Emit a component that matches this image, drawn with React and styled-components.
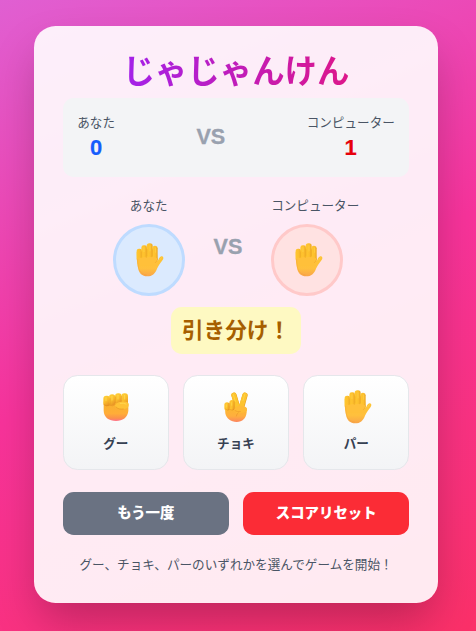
import React from "react";
import styled, { createGlobalStyle } from "styled-components";

const GlobalStyle = createGlobalStyle`
  * { box-sizing: border-box; }
  body {
    margin: 0;
    font-family: "Liberation Sans", "Noto Sans CJK JP", sans-serif;
    font-size: 14.4px;
  }
  h1, p { margin: 0; }
`;

const Page = styled.main`
  height: 631px;
  padding: 26px 38px 28px 34px;
  overflow: hidden;
  background: linear-gradient(156deg, #e05fd2 0%, #f7339b 50%, #fb3068 100%);
`;

const Card = styled.section`
  width: 404px;
  height: 577px;
  padding: 28px 28.8px 28.8px;
  border-radius: 21.6px;
  background: rgba(255, 255, 255, 0.9);
  box-shadow: 0 22px 45px -6px rgba(0, 0, 0, 0.25);
  display: flex;
  flex-direction: column;
`;

const Title = styled.h1`
  width: 100%;
  display: flex;
  justify-content: center;
  height: 36px;
  margin-bottom: 7.8px;

  span {
    font-size: 32.4px;
    line-height: 36px;
    font-weight: 700;
    color: transparent;
    background: linear-gradient(90deg, #a322ea, #dd178a);
    -webkit-background-clip: text;
    background-clip: text;
  }
`;

const ScoreBoard = styled.div`
  display: flex;
  justify-content: space-between;
  align-items: center;
  height: 79.4px;
  padding: 14.4px;
  border-radius: 10.8px;
  background: #f3f4f6;
`;

const Score = styled.div`
  text-align: center;
  padding-top: 3px;
`;

const Label = styled.p`
  font-size: 12.6px;
  line-height: 18px;
  text-align: center;
  color: #4a5565;
`;

const Points = styled.p`
  font-size: 22px;
  line-height: 32.4px;
  font-weight: 700;
  color: ${({ $color }) => $color};
  -webkit-text-stroke: 0.2px ${({ $color }) => $color};
`;

const Versus = styled.div`
  font-size: 21.6px;
  line-height: 28.8px;
  font-weight: 700;
  color: #99a1af;
  -webkit-text-stroke: 0.3px #99a1af;
`;

const ArenaVersus = styled(Versus)`
  padding-top: 2px;
`;

const Arena = styled.div`
  display: flex;
  justify-content: center;
  align-items: center;
  gap: 28.8px;
  height: 100px;
  margin-top: 18.8px;
`;

const Player = styled.div`
  display: flex;
  flex-direction: column;
  gap: 9px;
  padding-top: 1px;
`;

const Circle = styled.div`
  width: 72px;
  height: 72px;
  border-radius: 50%;
  display: flex;
  align-items: center;
  justify-content: center;
  padding: 0 0 1px 3px;
  background: ${({ $fill }) => $fill};
  border: 3px solid ${({ $line }) => $line};
`;

const Result = styled.div`
  align-self: center;
  margin-top: 11.2px;
  height: 46.8px;
  padding: 9.6px 10.8px 0;
  border-radius: 10.8px;
  background: #fef9c2;
  color: #a65f00;
  font-size: 21.6px;
  line-height: 28.8px;
  font-weight: 700;
`;

const Choices = styled.div`
  display: grid;
  grid-template-columns: repeat(3, 1fr);
  gap: 14.4px;
  margin-top: 21px;
`;

const Choice = styled.button`
  height: 95px;
  padding: 13px 0 0;
  border: 1px solid #e5e7eb;
  border-radius: 14.4px;
  background: linear-gradient(#ffffff, #f3f4f6);
  color: #364153;
  font: 700 12.6px/18px "Liberation Sans", "Noto Sans CJK JP", sans-serif;
  display: flex;
  flex-direction: column;
  align-items: center;
  gap: 10px;
`;

const IconSlot = styled.span`
  display: flex;
  height: 36px;
  align-items: center;
  padding-left: ${({ $shift }) => $shift}px;
`;

const Actions = styled.div`
  display: grid;
  grid-template-columns: 1fr 1fr;
  gap: 14.4px;
  margin-top: 22px;
`;

const Action = styled.button`
  height: 43px;
  padding: 0 0 3px;
  border: 0;
  border-radius: 10.8px;
  background: ${({ $bg }) => $bg};
  color: #fff;
  font: 900 14.4px/21.6px "Noto Sans CJK JP", sans-serif;
`;

const Hint = styled(Label)`
  margin-top: 21px;
  white-space: nowrap;
`;

const Svg = styled.svg`
  display: block;
  overflow: visible;
`;

function Hand({ id }) {
  return (
    <Svg width="28" height="33.3" viewBox="0 0 84 100">
      <defs>
        <linearGradient id={`${id}p`} x1="0" y1="0" x2="0" y2="1">
          <stop offset="0" stopColor="#fcc52e" />
          <stop offset=".7" stopColor="#ffc03d" />
          <stop offset="1" stopColor="#f9a54a" />
        </linearGradient>
        <linearGradient id={`${id}f`} x1="0" y1="0" x2="1" y2="0">
          <stop offset="0" stopColor="#ffc730" />
          <stop offset=".6" stopColor="#fdbf2d" />
          <stop offset="1" stopColor="#eba522" />
        </linearGradient>
      </defs>
      <path fill={`url(#${id}p)`} d="M2 26 L62 20 L65 54 C69 49 70 41 76 40 C82 40 84 45 80 51 C74 59 68 66 63 77 C58 92 48 100 34 100 C18 100 9 91 6 75 C4 65 2 54 2 26Z" />
      <g fill={`url(#${id}f)`}>
        <rect x="2" y="17" width="16" height="36" rx="6.5" />
        <rect x="16" y="7" width="17" height="47" rx="7" />
        <rect x="32" y="1" width="18" height="49" rx="8" />
        <rect x="49" y="8" width="16" height="46" rx="7.5" />
      </g>
      <path fill="#ffc03a" d="M2 48 Q9 41 16 46 Q24 40 32 44 Q40 39 48 43 Q56 39 65 48 L60 68 L7 68Z" />
      <path fill="none" stroke="#e59a22" strokeWidth="2" strokeLinecap="round" opacity=".6" d="M17 27V42M33 20V39M49.5 18V39M65 48C64 53 62 55 58 59" />
      <path fill="none" stroke="#ee903a" strokeWidth="3" strokeLinecap="round" opacity=".3" d="M5 49C5 76 10 94 31 96" />
      <path fill="none" stroke="#ffdb59" strokeWidth="3" strokeLinecap="round" opacity=".5" d="M42 8V24M59 15V28M24 14V26M76 44L71 51" />
    </Svg>
  );
}

function Fist() {
  return (
    <Svg width="26" height="28" viewBox="0 0 78 84">
      <defs>
        <linearGradient id="fistPalm" x1="0" y1="0" x2="0" y2="1">
          <stop offset="0" stopColor="#f6b42b" />
          <stop offset=".65" stopColor="#ffad38" />
          <stop offset=".87" stopColor="#fb914c" />
          <stop offset="1" stopColor="#ff718c" />
        </linearGradient>
        <linearGradient id="fistFinger" x1="0" y1="0" x2=".5" y2="1">
          <stop offset="0" stopColor="#ffd238" />
          <stop offset=".6" stopColor="#fabb2c" />
          <stop offset="1" stopColor="#ea9826" />
        </linearGradient>
      </defs>
      <path fill="url(#fistPalm)" d="M2 26C10 17 67 17 76 32V54C74 74 59 84 39 84C18 84 3 74 2 54Z" />
      <g fill="url(#fistFinger)">
        <rect x="1" y="8" width="20" height="31" rx="9" />
        <rect x="18" y="4" width="19" height="33" rx="9" />
        <rect x="36" y="1" width="20" height="32" rx="9" />
        <rect x="55" y="1" width="20" height="36" rx="9" />
      </g>
      <path fill="#ffc236" d="M37 35C43 25 62 24 72 27C79 30 79 42 71 46C62 49 51 50 42 46C38 42 34 40 37 35Z" />
      <path fill="none" stroke="#dd821f" strokeWidth="2" strokeLinecap="round" opacity=".65" d="M3 35Q10 42 20 37Q28 41 36 35M39 42C44 48 52 49 61 48M21 17V34M37 12V29M55 10V25" />
      <path fill="none" stroke="#ffe05a" strokeWidth="3" strokeLinecap="round" opacity=".7" d="M9 14V23M27 10V21M45 7V18M65 7V18M52 31Q61 29 69 33" />
    </Svg>
  );
}

function Peace() {
  return (
    <Svg width="24" height="31" viewBox="0 0 72 93">
      <defs>
        <linearGradient id="peacePalm" x1="0" y1="0" x2="0" y2="1">
          <stop offset="0" stopColor="#fbbc2c" />
          <stop offset=".65" stopColor="#ffae3e" />
          <stop offset="1" stopColor="#fc8560" />
        </linearGradient>
        <linearGradient id="peaceFinger" x1="0" y1="0" x2="1" y2=".2">
          <stop offset="0" stopColor="#ffc936" />
          <stop offset=".6" stopColor="#fdc02c" />
          <stop offset="1" stopColor="#e99c20" />
        </linearGradient>
      </defs>
      <path fill="url(#peacePalm)" d="M3 48L34 43L68 51V63C67 82 55 93 38 93C20 93 7 83 4 67Z" />
      <g strokeLinecap="round" fill="none">
        <path stroke="#e69a20" strokeWidth="16" d="M30 13L40 46" />
        <path stroke="#fdc42d" strokeWidth="14.5" d="M29.5 12L39 45" />
        <path stroke="#e99d22" strokeWidth="16" d="M63 13L53 48" />
        <path stroke="#fdc42f" strokeWidth="14.5" d="M62.5 12L52 47" />
      </g>
      <g fill="url(#peaceFinger)">
        <rect x="1" y="34" width="16" height="25" rx="8" />
        <rect x="16" y="27" width="16" height="31" rx="8" />
      </g>
      <path fill="#ffbb36" d="M29 59C31 50 39 43 50 44C63 44 70 49 69 58C66 66 51 65 42 68Z" />
      <path fill="none" stroke="#e28424" strokeWidth="2" strokeLinecap="round" opacity=".65" d="M4 54Q10 60 17 55Q24 61 31 54M33 59Q40 64 49 62M43 65Q38 69 37 75M17 37V51" />
      <path fill="none" stroke="#ffdf55" strokeWidth="3" strokeLinecap="round" opacity=".6" d="M28 11L34 31M62 11L57 29M8 41V48M23 35V43" />
    </Svg>
  );
}

const choices = [
  { name: "グー", icon: <Fist />, shift: 0 },
  { name: "チョキ", icon: <Peace />, shift: 0 },
  { name: "パー", icon: <Hand id="choice" />, shift: 3 },
];

export default function App() {
  return (
    <Page>
      <GlobalStyle />
      <Card>
        <Title><span>じゃじゃんけん</span></Title>
        <ScoreBoard>
          <Score><Label>あなた</Label><Points $color="#155dfc">0</Points></Score>
          <Versus>VS</Versus>
          <Score><Label>コンピューター</Label><Points $color="#e7000b">1</Points></Score>
        </ScoreBoard>
        <Arena>
          <Player>
            <Label>あなた</Label>
            <Circle $fill="#dbeafe" $line="#bedbff"><Hand id="you" /></Circle>
          </Player>
          <ArenaVersus>VS</ArenaVersus>
          <Player>
            <Label>コンピューター</Label>
            <Circle $fill="#ffe2e2" $line="#ffc9c9"><Hand id="cpu" /></Circle>
          </Player>
        </Arena>
        <Result>引き分け！</Result>
        <Choices>
          {choices.map(({ name, icon, shift }) => (
            <Choice key={name}><IconSlot $shift={shift}>{icon}</IconSlot>{name}</Choice>
          ))}
        </Choices>
        <Actions>
          <Action $bg="#6a7282">もう一度</Action>
          <Action $bg="#fb2c36">スコアリセット</Action>
        </Actions>
        <Hint>グー、チョキ、パーのいずれかを選んでゲームを開始！</Hint>
      </Card>
    </Page>
  );
}
